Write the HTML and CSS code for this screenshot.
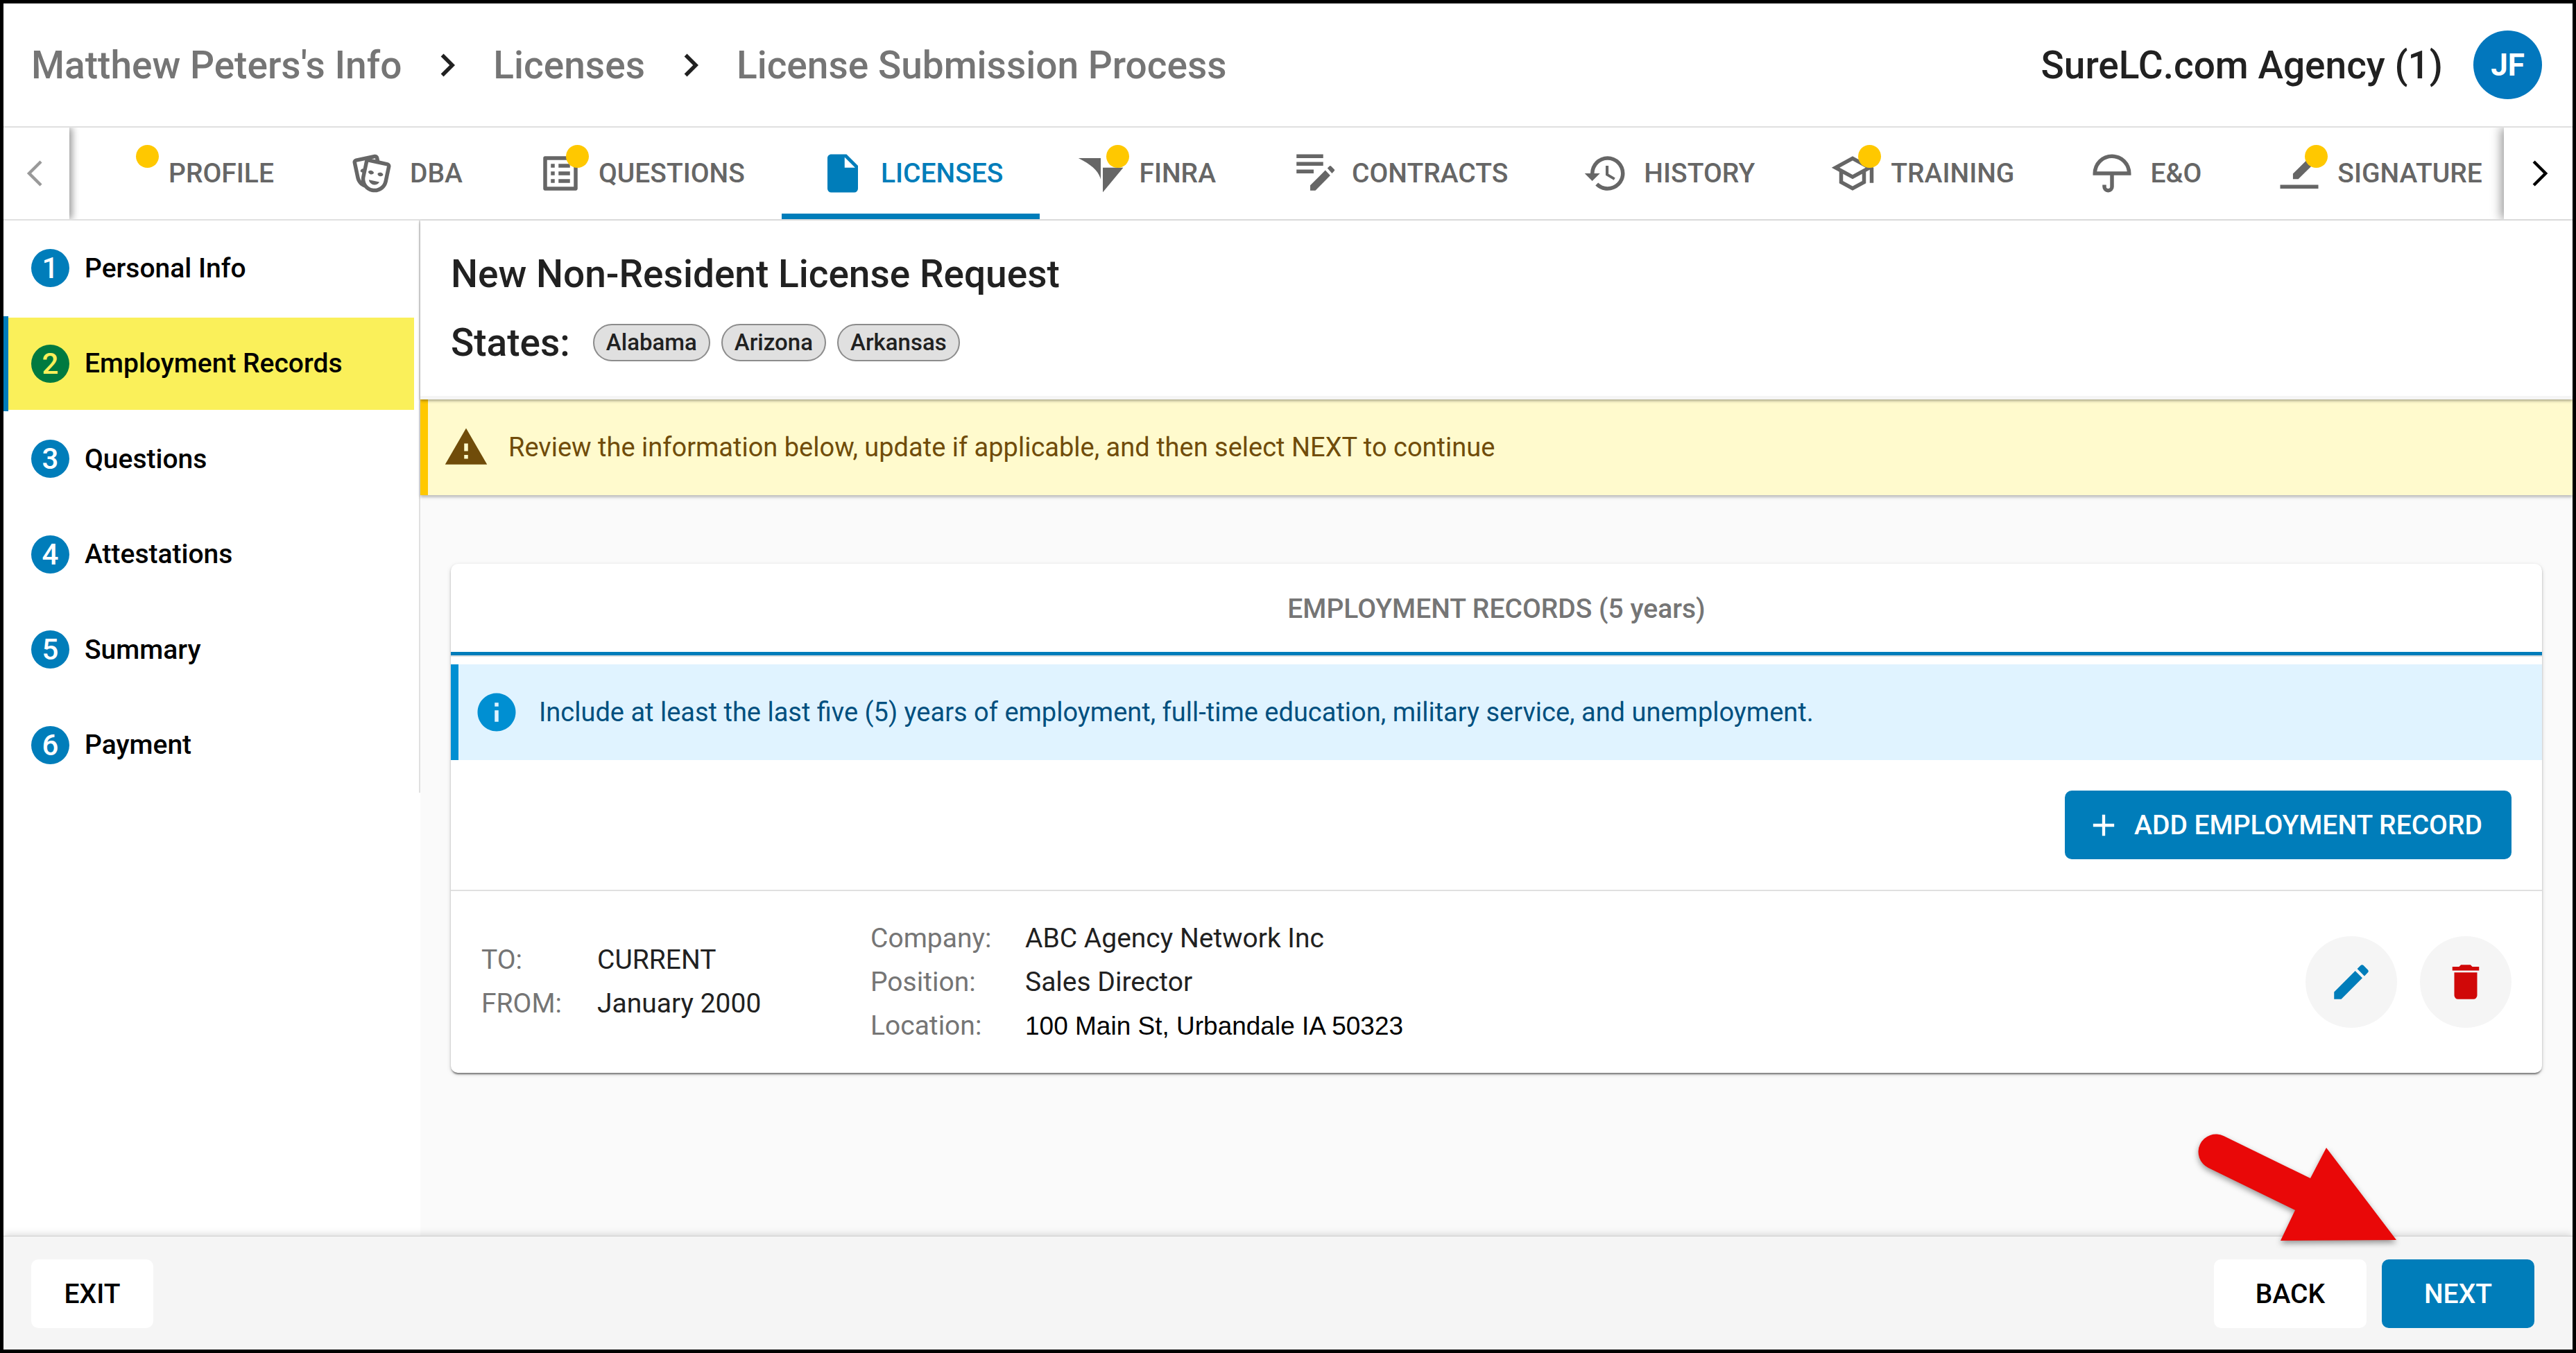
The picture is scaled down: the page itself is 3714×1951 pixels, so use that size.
FILE: index.html
```html
<!DOCTYPE html>
<html lang="en">
<head>
    <meta charset="utf-8">
    <title>License Submission Process</title>
    <link rel="stylesheet" href="styles.css">
</head>
<body>
<div class="app">
    <header class="topbar">
        <nav class="breadcrumbs">
            <a href="#">Matthew Peters's Info</a>
            <svg class="icon" viewBox="0 0 24 24"><path d="M8.59 16.58L13.17 12 8.59 7.41 10 6l6 6-6 6-1.41-1.42z"/></svg>
            <a href="#">Licenses</a>
            <svg class="icon" viewBox="0 0 24 24"><path d="M8.59 16.58L13.17 12 8.59 7.41 10 6l6 6-6 6-1.41-1.42z"/></svg>
            <a href="#">License Submission Process</a>
        </nav>
        <div class="account">
            <span>SureLC.com Agency (1)</span>
            <button class="avatar">JF</button>
        </div>
    </header>

    <div class="tabbar">
        <button class="scroll-btn scroll-left" aria-label="Scroll left" disabled>
            <svg class="icon" viewBox="0 0 24 24"><path d="M14.2 5.8L8 12l6.2 6.2" fill="none" stroke="currentColor" stroke-width="1.6"/></svg>
        </button>
        <nav class="tabs">
            <a class="tab" href="#"><span class="tab-icon"><i class="dot"></i></span>PROFILE</a>
            <a class="tab" href="#">
                <span class="tab-icon"><svg class="icon" viewBox="0 0 24 24"><path d="M8.11 19.45C5.94 18.65 4.22 16.78 3.71 14.35L2.05 6.54C1.81 5.46 2.5 4.4 3.58 4.17L13.35 2.1L13.38 2.09C14.45 1.88 15.5 2.57 15.72 3.63L16.07 5.3L20.42 6.23H20.45C21.5 6.47 22.18 7.53 21.96 8.59L20.3 16.41C19.5 20.18 15.78 22.6 12 21.79C10.42 21.46 9.08 20.61 8.11 19.45M20 8.18L10.23 6.1L8.57 13.92V13.95C8 16.63 9.73 19.27 12.42 19.84C15.11 20.41 17.77 18.69 18.34 16L20 8.18M16 16.5C15.37 17.57 14.11 18.16 12.83 17.89C11.56 17.62 10.65 16.57 10.5 15.34L16 16.5M8.47 5.17L4 6.13L5.66 13.94L5.67 13.97C5.82 14.68 6.12 15.32 6.53 15.87C6.43 15.1 6.45 14.3 6.62 13.5L7.05 11.5C6.6 11.42 6.21 11.17 6 10.81C6.06 10.2 6.56 9.66 7.25 9.5C7.33 9.5 7.4 9.5 7.5 9.5L8.28 5.69C8.32 5.5 8.38 5.33 8.47 5.17M15.03 12.23C15.35 11.7 16.03 11.42 16.72 11.57C17.41 11.71 17.91 12.24 18 12.86C17.67 13.38 17 13.66 16.3 13.5C15.61 13.37 15.11 12.84 15.03 12.23M10.15 11.19C10.47 10.66 11.14 10.38 11.83 10.53C12.5 10.67 13.03 11.21 13.11 11.82C12.78 12.34 12.11 12.63 11.42 12.5C10.73 12.33 10.23 11.8 10.15 11.19M11.97 4.43L13.93 4.85L13.77 4.05L11.97 4.43Z"/></svg></span>DBA</a>
            <a class="tab" href="#">
                <span class="tab-icon"><svg class="icon" viewBox="0 0 24 24"><path d="M19 5v14H5V5h14m1.1-2H3.9c-.5 0-.9.4-.9.9v16.2c0 .4.4.9.9.9h16.2c.4 0 .9-.5.9-.9V3.9c0-.5-.5-.9-.9-.9zM11 7h6v2h-6V7zm0 4h6v2h-6v-2zm0 4h6v2h-6zM7 7h2v2H7zm0 4h2v2H7zm0 4h2v2H7z"/></svg><i class="dot"></i></span>QUESTIONS</a>
            <a class="tab active" href="#">
                <span class="tab-icon"><svg class="icon" viewBox="0 0 24 24"><path d="M13 9V3.5L18.5 9M6 2C4.89 2 4 2.89 4 4V20A2 2 0 0 0 6 22H18A2 2 0 0 0 20 20V8L14 2H6Z"/></svg></span>LICENSES</a>
            <a class="tab" href="#">
                <span class="tab-icon"><svg class="icon" viewBox="0 0 24 24"><path d="M.3 4H12v11.2C11 11 7.5 7.6 .3 4zM13.1 9h10.7L13.1 21.9z"/></svg><i class="dot"></i></span>FINRA</a>
            <a class="tab" href="#">
                <span class="tab-icon"><svg class="icon" viewBox="0 0 24 24"><path d="M3 2h14v2H3zM3 6h14v2H3zM3 10h9v2H3zM10.2 18.3l7.9-7.9 2.6 2.7-7.8 7.9h-2.7zM19.2 9.3L20.3 8.2q.4-.4.8 0L22.8 9.9q.4.4 0 .8L21.6 12z"/></svg></span>CONTRACTS</a>
            <a class="tab" href="#">
                <span class="tab-icon"><svg class="icon" viewBox="0 0 24 24"><path d="M13.5 8H12V13L16.28 15.54L17 14.33L13.5 12.25V8M13 3A9 9 0 0 0 4 12H1L4.96 16.03L9 12H6A7 7 0 0 1 13 5A7 7 0 0 1 20 12A7 7 0 0 1 13 19C11.07 19 9.32 18.21 8.06 16.94L6.64 18.36C8.27 20 10.5 21 13 21A9 9 0 0 0 22 12A9 9 0 0 0 13 3"/></svg></span>HISTORY</a>
            <a class="tab" href="#">
                <span class="tab-icon"><svg class="icon" viewBox="0 0 24 24"><path d="M12 3L1 9L5 11.18V17.18L12 21L19 17.18V11.18L21 10.09V17H23V9L12 3M18.82 9L12 12.72L5.18 9L12 5.28L18.82 9M17 16L12 18.72L7 16V12.27L12 15L17 12.27V16Z"/></svg><i class="dot"></i></span>TRAINING</a>
            <a class="tab" href="#">
                <span class="tab-icon"><svg class="icon" viewBox="0 0 24 24"><path d="M12 4A8 8 0 0 0 4.07 11H19.93A8 8 0 0 0 12 4M12 2A10 10 0 0 1 22 12V13H13V19A3 3 0 0 1 10 22A3 3 0 0 1 7 19V18H9V19A1 1 0 0 0 10 20A1 1 0 0 0 11 19V13H2V12A10 10 0 0 1 12 2Z"/></svg></span>E&amp;O</a>
            <a class="tab" href="#">
                <span class="tab-icon"><svg class="icon" viewBox="0 0 24 24"><path d="M2 18h20v2H2zM8.7 12.2L18 3l2.8 2.8L11.5 15H8.7z"/></svg><i class="dot"></i></span>SIGNATURE</a>
        </nav>
        <button class="scroll-btn scroll-right" aria-label="Scroll right">
            <svg class="icon" viewBox="0 0 24 24"><path d="M9.5 5.8l6.2 6.2-6.2 6.2" fill="none" stroke="currentColor" stroke-width="1.6"/></svg>
        </button>
    </div>

    <div class="body">
        <aside class="sidebar">
            <ol class="steps">
                <li><a href="#"><span class="num">1</span>Personal Info</a></li>
                <li class="current"><a href="#"><span class="num">2</span>Employment Records</a></li>
                <li><a href="#"><span class="num">3</span>Questions</a></li>
                <li><a href="#"><span class="num">4</span>Attestations</a></li>
                <li><a href="#"><span class="num">5</span>Summary</a></li>
                <li><a href="#"><span class="num">6</span>Payment</a></li>
            </ol>
        </aside>

        <main class="content">
            <div class="page-head">
                <h1>New Non-Resident License Request</h1>
                <div class="states">
                    <h2>States:</h2>
                    <ul class="chips">
                        <li>Alabama</li>
                        <li>Arizona</li>
                        <li>Arkansas</li>
                    </ul>
                </div>
            </div>

            <div class="notice warning">
                <svg class="icon" viewBox="0 0 24 24"><path d="M1 21h22L12 2 1 21zm12-3h-2v-2h2v2zm0-4h-2v-4h2v4z"/></svg>
                <p>Review the information below, update if applicable, and then select NEXT to continue</p>
            </div>

            <section class="card">
                <h3>EMPLOYMENT RECORDS (5 years)</h3>
                <div class="notice info">
                    <svg class="icon" viewBox="0 0 24 24"><path d="M12 2C6.48 2 2 6.48 2 12s4.48 10 10 10 10-4.48 10-10S17.52 2 12 2zm1 15h-2v-6h2v6zm0-8h-2V7h2v2z"/></svg>
                    <p>Include at least the last five (5) years of employment, full-time education, military service, and unemployment.</p>
                </div>
                <div class="card-actions">
                    <button class="btn primary add">
                        <svg viewBox="0 0 24 24"><path d="M19 13h-6v6h-2v-6H5v-2h6V5h2v6h6v2z"/></svg>
                        ADD EMPLOYMENT RECORD
                    </button>
                </div>
                <div class="record">
                    <dl class="dates">
                        <dt>TO:</dt><dd>CURRENT</dd>
                        <dt>FROM:</dt><dd>January 2000</dd>
                    </dl>
                    <dl class="details">
                        <dt>Company:</dt><dd>ABC Agency Network Inc</dd>
                        <dt>Position:</dt><dd>Sales Director</dd>
                        <dt>Location:</dt><dd class="address">100 Main St, Urbandale IA 50323</dd>
                    </dl>
                    <div class="record-buttons">
                        <button class="round edit" aria-label="Edit">
                            <svg class="icon" viewBox="0 0 24 24"><path d="M3 17.25V21h3.75L17.81 9.94l-3.75-3.75L3 17.25zM20.71 7.04c.39-.39.39-1.02 0-1.41l-2.34-2.34c-.39-.39-1.02-.39-1.41 0l-1.83 1.83 3.75 3.75 1.83-1.83z"/></svg>
                        </button>
                        <button class="round delete" aria-label="Delete">
                            <svg class="icon" viewBox="0 0 24 24"><path d="M19 4H15.5L14.5 3H9.5L8.5 4H5V6H19M6 19A2 2 0 0 0 8 21H16A2 2 0 0 0 18 19V7H6V19Z"/></svg>
                        </button>
                    </div>
                </div>
            </section>
        </main>
    </div>

    <footer class="footer">
        <button class="btn exit">EXIT</button>
        <div class="footer-right">
            <button class="btn wide">BACK</button>
            <button class="btn wide primary">NEXT</button>
        </div>
        <svg class="pointer" viewBox="0 0 300 170"><path d="M41 8L166 69 189 25 290 158 123 159 144 115 19 54A25 25 0 0 1 41 8z"/></svg>
    </footer>
</div>
</body>
</html>
```
FILE: styles.css
```css
* { box-sizing: border-box; }
body {
    margin: 0;
    font-family: Roboto, "Liberation Sans", sans-serif;
    font-size: 39px;
    color: #212121;
}
h1, h2, h3, p, ul, ol, dl, dd {
    margin: 0;
    padding: 0;
    list-style: none;
}
a { color: inherit; text-decoration: none; }
button {
    border: 0;
    padding: 0;
    font: inherit;
    color: inherit;
    cursor: pointer;
}
.icon {
    display: block;
    width: 66px;
    height: 66px;
    flex: none;
    fill: currentColor;
}
.app {
    display: flex;
    flex-direction: column;
    min-height: 100vh;
    border: 5px solid #000;
    background: #fff;
}

/* top bar */
.topbar {
    display: flex;
    justify-content: space-between;
    align-items: center;
    height: 179px;
    padding: 0 44px 0 40px;
    border-bottom: 2px solid #e0e0e0;
    font-size: 55px;
    font-weight: 500;
}
.breadcrumbs {
    display: flex;
    align-items: center;
    gap: 33px;
}
.breadcrumbs a { color: #757575; }
.account {
    display: flex;
    align-items: center;
    gap: 44px;
}
.avatar {
    width: 99px;
    height: 99px;
    border-radius: 50%;
    background: #0277bd;
    color: #fff;
    font-size: 44px;
    font-weight: 700;
}

/* tabs */
.tabbar {
    display: flex;
    height: 134px;
    border-bottom: 2px solid #e0e0e0;
}
.scroll-btn {
    position: relative;
    z-index: 1;
    display: flex;
    align-items: center;
    justify-content: center;
    width: 95px;
    flex: none;
    background: #fff;
    color: #000;
    clip-path: inset(0 -30px);
}
.scroll-left { color: #999; box-shadow: 4px 0 10px rgba(0, 0, 0, 0.4); }
.scroll-right { width: 99px; box-shadow: -4px 0 14px rgba(0, 0, 0, 0.4); }
.tabs {
    display: flex;
    flex: 1;
    min-width: 0;
    overflow: hidden;
}
.tab {
    display: flex;
    align-items: center;
    flex: none;
    gap: 22px;
    padding: 0 53px 0 55px;
    color: #666;
    font-weight: 500;
}
.tab.active {
    color: #007dba;
    box-shadow: inset 0 -8px #007dba;
}
.tab-icon {
    position: relative;
    width: 66px;
    height: 66px;
}
.dot {
    position: absolute;
    top: -8px;
    left: 41px;
    width: 33px;
    height: 33px;
    border-radius: 50%;
    background: #ffc800;
}

/* sidebar */
.body {
    display: flex;
    flex: 1;
}
.sidebar {
    width: 601px;
    flex: none;
}
.steps {
    display: flex;
    flex-direction: column;
    height: 825px;
    border-right: 2px solid #e0e0e0;
}
.steps li {
    display: flex;
    flex: 1;
    padding: 2px 7px 2px 0;
    border-left: 7px solid transparent;
}
.steps a {
    display: flex;
    flex: 1;
    align-items: center;
    gap: 22px;
    padding-left: 33px;
    color: #000;
    font-weight: 500;
}
.num {
    width: 55px;
    height: 55px;
    border-radius: 50%;
    background: #007dba;
    color: #fff;
    font-size: 42px;
    line-height: 55px;
    text-align: center;
}
.steps .current { border-left-color: #007dba; }
.current a { background: #faf05a; }
.current .num { background: #007a40; color: #faf05a; }

/* content */
.content {
    flex: 1;
    min-width: 0;
    background: #fafafa;
}
.page-head {
    position: relative;
    padding: 44px;
    background: #fff;
    border-bottom: 5px solid #f5f5f5;
    box-shadow: 0 2px 4px rgba(0, 0, 0, 0.35);
}
h1, h2 {
    font-size: 55px;
    font-weight: 500;
    line-height: 66px;
}
.states {
    display: flex;
    align-items: center;
    gap: 33px;
    margin-top: 33px;
}
.chips {
    display: flex;
    gap: 16px;
}
.chips li {
    height: 54px;
    padding: 0 17px;
    border: 2px solid #8c8c8c;
    border-radius: 27px;
    background: #e0e0e0;
    font-size: 33px;
    font-weight: 500;
    line-height: 50px;
}
.notice {
    display: flex;
    align-items: center;
    gap: 28px;
    height: 138px;
    padding: 0 22px;
    border-left: 11px solid;
    font-size: 38px;
}
.warning {
    border-color: #ffc800;
    background: #fffacd;
    color: #704c0a;
    box-shadow: 0 3px 4px rgba(0, 0, 0, 0.25);
}
.info {
    border-color: #008fd2;
    background: #e0f3ff;
    color: #00507f;
}
.info .icon { color: #008fd2; }

/* employment card */
.card {
    margin: 99px 44px;
    border-radius: 10px;
    background: #fff;
    box-shadow: 0 4px 2px -2px rgba(0, 0, 0, 0.3), 0 2px 3px rgba(0, 0, 0, 0.25), 0 2px 7px rgba(0, 0, 0, 0.12);
}
h3 {
    margin-bottom: 13px;
    padding-top: 3px;
    border-bottom: 5px solid #007dba;
    box-shadow: 0 2px #dcdfe0;
    color: #757575;
    font-size: 39px;
    font-weight: 500;
    line-height: 124px;
    text-align: center;
}
.card-actions {
    display: flex;
    justify-content: flex-end;
    padding: 44px;
    border-bottom: 2px solid #e0e0e0;
}
.btn {
    height: 99px;
    padding: 0 44px;
    border-radius: 10px;
    background: #fff;
    color: #000;
    font-weight: 500;
}
.exit { min-width: 176px; }
.wide { min-width: 220px; }
.primary { background: #007dba; color: #fff; }
.add {
    display: flex;
    align-items: center;
    gap: 18px;
    padding: 0 42px 0 30px;
}
.add svg {
    width: 52px;
    height: 52px;
    fill: #fff;
}
.record {
    display: flex;
    align-items: center;
    height: 262px;
    padding: 0 44px;
}
.record dl {
    display: grid;
    line-height: 63px;
}
.dates { grid-template-columns: 167px 394px; }
.details { grid-template-columns: 223px 1fr; }
dt { color: #757575; }
.address {
    color: #000;
    font-family: "Liberation Sans", Arial, sans-serif;
    font-size: 37px;
}
.record-buttons {
    display: flex;
    gap: 33px;
    margin-left: auto;
}
.round {
    display: flex;
    align-items: center;
    justify-content: center;
    width: 132px;
    height: 132px;
    border-radius: 50%;
    background: #f5f5f5;
}
.edit { color: #007dba; }
.delete { color: #d00808; }

/* footer */
.footer {
    position: relative;
    display: flex;
    justify-content: space-between;
    padding: 33px 55px 31px 40px;
    border-top: 1px solid #d0d0d0;
    background: #f5f5f5;
    box-shadow: 0 0 12px rgba(0, 0, 0, 0.2);
}
.footer-right {
    display: flex;
    gap: 22px;
}
/* red arrow that points at NEXT */
.pointer {
    position: absolute;
    right: 244px;
    bottom: 146px;
    width: 300px;
    height: 170px;
    overflow: visible;
    fill: #e90808;
    filter: drop-shadow(0 4px 4px rgba(0, 0, 0, 0.4));
}
```
